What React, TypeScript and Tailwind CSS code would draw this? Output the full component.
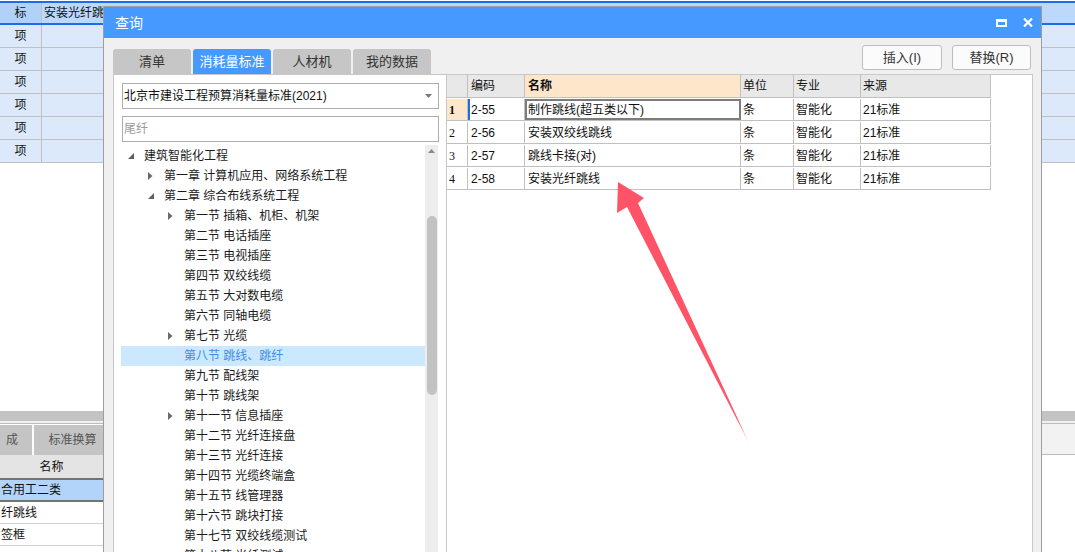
import React from 'react';

type Node = { level: number; text: string; icon?: 'open' | 'closed'; selected?: boolean };

const tree: Node[] = [
  { level: 0, text: '建筑智能化工程', icon: 'open' },
  { level: 1, text: '第一章 计算机应用、网络系统工程', icon: 'closed' },
  { level: 1, text: '第二章 综合布线系统工程', icon: 'open' },
  { level: 2, text: '第一节 插箱、机柜、机架', icon: 'closed' },
  { level: 2, text: '第二节 电话插座' },
  { level: 2, text: '第三节 电视插座' },
  { level: 2, text: '第四节 双绞线缆' },
  { level: 2, text: '第五节 大对数电缆' },
  { level: 2, text: '第六节 同轴电缆' },
  { level: 2, text: '第七节 光缆', icon: 'closed' },
  { level: 2, text: '第八节 跳线、跳纤', selected: true },
  { level: 2, text: '第九节 配线架' },
  { level: 2, text: '第十节 跳线架' },
  { level: 2, text: '第十一节 信息插座', icon: 'closed' },
  { level: 2, text: '第十二节 光纤连接盘' },
  { level: 2, text: '第十三节 光纤连接' },
  { level: 2, text: '第十四节 光缆终端盒' },
  { level: 2, text: '第十五节 线管理器' },
  { level: 2, text: '第十六节 跳块打接' },
  { level: 2, text: '第十七节 双绞线缆测试' },
  { level: 2, text: '第十八节 光纤测试' },
];

const rows = [
  { no: '1', code: '2-55', name: '制作跳线(超五类以下)' },
  { no: '2', code: '2-56', name: '安装双绞线跳线' },
  { no: '3', code: '2-57', name: '跳线卡接(对)' },
  { no: '4', code: '2-58', name: '安装光纤跳线' },
];

function TreeIcon({ kind }: { kind?: 'open' | 'closed' }) {
  return (
    <span className="flex h-[20px] w-[16px] shrink-0 items-center pl-[3px]">
      {kind === 'open' && (
        <svg width="6" height="6" viewBox="0 0 6 6">
          <polygon points="6,0 6,6 0,6" fill="#5f5f5f" />
        </svg>
      )}
      {kind === 'closed' && (
        <svg width="5" height="8" viewBox="0 0 5 8">
          <polygon points="0,0 4.5,4 0,8" fill="#6a6a6a" />
        </svg>
      )}
    </span>
  );
}

function Tab({ label, active }: { label: string; active?: boolean }) {
  return (
    <div
      className={
        active
          ? 'flex h-[25px] w-[78px] items-center justify-center rounded-t-[3px] bg-[#4599ff] text-[13px] text-white'
          : 'flex h-[25px] w-[78px] items-center justify-center rounded-t-[3px] bg-[#c6c6c6] text-[13px] text-[#333]'
      }
    >
      {label}
    </div>
  );
}

function Dialog() {
  return (
    <div className="absolute left-[103px] top-[6px] flex h-[560px] w-[939px] flex-col border border-[#9e9e9e] bg-[#f0f0f0]">
      {/* title bar */}
      <div className="flex h-[31px] shrink-0 items-center bg-[#4599ff] pl-[11px] pr-[8px] text-[14px] text-white">
        <span>查询</span>
        <div className="ml-auto flex items-center gap-[16px]">
          <span className="block h-[8px] w-[11px] border-2 border-t-[3px] border-white" />
          <svg width="10" height="9" viewBox="0 0 10 9">
            <path d="M1 0.5 L9 8.5 M9 0.5 L1 8.5" stroke="#fff" strokeWidth="2.2" />
          </svg>
        </div>
      </div>

      <div className="flex min-h-0 flex-1 pl-[9px] pr-[8px] pt-[7px]">
        {/* left column */}
        <div className="flex w-[333px] shrink-0 flex-col">
          <div className="mt-[4px] flex gap-[2px]">
            <Tab label="清单" />
            <Tab label="消耗量标准" active />
            <Tab label="人材机" />
            <Tab label="我的数据" />
          </div>
          <div className="flex min-h-0 flex-1 flex-col border-y border-l border-[#c8c8c8] bg-white">
            <div className="ml-[8px] mt-[8px] flex h-[26px] w-[317px] items-center border border-[#adadad] bg-white pl-[1px] pr-[6px] text-[12px] text-[#111]">
              <span>北京市建设工程预算消耗量标准(2021)</span>
              <svg className="ml-auto" width="7" height="4" viewBox="0 0 7 4">
                <polygon points="0,0 7,0 3.5,4" fill="#7a7a7a" />
              </svg>
            </div>
            <div className="ml-[8px] mt-[7px] flex h-[26px] w-[317px] items-center border border-[#adadad] bg-white pl-[1px] text-[12px] text-[#9a9a9a]">
              尾纤
            </div>
            <div className="ml-[7px] mr-[8px] mt-[3px] flex min-h-0 flex-1">
              <div className="flex-1 overflow-hidden pt-[1px]">
                {tree.map((n) => (
                  <div
                    key={n.text}
                    className={
                      n.selected
                        ? 'flex h-[20px] items-center bg-[#cce8ff] text-[12px] text-[#3d8de8]'
                        : 'flex h-[20px] items-center text-[12px] text-[#1b1b1b]'
                    }
                    style={{ paddingLeft: 4 + n.level * 20 }}
                  >
                    <TreeIcon kind={n.icon} />
                    <span className="ml-[3px] whitespace-nowrap">{n.text}</span>
                  </div>
                ))}
              </div>
              <div className="flex w-[13px] shrink-0 flex-col items-center bg-[#ededed]">
                <svg className="mt-[4px]" width="7" height="4" viewBox="0 0 7 4">
                  <polygon points="3.5,0 7,4 0,4" fill="#8a8a8a" />
                </svg>
                <div className="mt-[63px] h-[179px] w-[10px] rounded-[5px] bg-[#c2c2c2]" />
              </div>
            </div>
          </div>
        </div>

        {/* right column */}
        <div className="flex min-w-0 flex-1 flex-col">
          <div className="flex h-[25px] justify-end gap-[10px] pr-[2px]">
            <button className="h-[25px] w-[80px] rounded-[3px] border border-[#bdbdbd] bg-[#fbfbfb] text-[13px] text-[#333]">
              插入(I)
            </button>
            <button className="h-[25px] w-[79px] rounded-[3px] border border-[#bdbdbd] bg-[#fbfbfb] text-[13px] text-[#333]">
              替换(R)
            </button>
          </div>
          <div className="mt-[4px] min-h-0 flex-1 border border-[#c8c8c8] bg-white">
            <div className="w-[544px] text-[12px] text-[#111]">
              <div className="flex h-[23px] border-b border-[#c0c0c0] bg-[#e8e8e8]">
                <div className="w-[21px] border-r border-[#c0c0c0]" />
                <div className="flex w-[57px] items-center border-r border-[#c0c0c0] pl-[3px]">编码</div>
                <div className="flex w-[216px] items-center border-r border-[#c0c0c0] bg-[#fde6c9] pl-[3px] font-bold">名称</div>
                <div className="flex w-[53px] items-center border-r border-[#c0c0c0] pl-[2px]">单位</div>
                <div className="flex w-[67px] items-center border-r border-[#c0c0c0] pl-[2px]">专业</div>
                <div className="flex w-[130px] items-center border-r border-[#c0c0c0] pl-[2px]">来源</div>
              </div>
              {rows.map((r, i) => (
                <div key={r.no} className="flex h-[23px] border-b border-[#c0c0c0] pt-[1px]">
                  <div
                    className={
                      i === 0
                        ? "flex w-[21px] items-center border-r border-[#c0c0c0] bg-[#fde6c9] pl-[2px] font-['Liberation_Serif',serif] font-bold"
                        : "flex w-[21px] items-center border-r border-[#c0c0c0] pl-[2px] font-['Liberation_Serif',serif]"
                    }
                  >
                    {r.no}
                  </div>
                  <div
                    className={
                      i === 0
                        ? 'flex w-[57px] items-center border-l-2 border-r border-l-[#1a6fe8] border-r-[#c0c0c0] pl-[1px]'
                        : 'flex w-[57px] items-center border-r border-[#c0c0c0] pl-[3px]'
                    }
                  >
                    {r.code}
                  </div>
                  <div
                    className={
                      i === 0
                        ? 'flex w-[216px] items-center border-2 border-[#7c7c7c] pl-[1px]'
                        : 'flex w-[216px] items-center border-r border-[#c0c0c0] pl-[3px]'
                    }
                  >
                    {r.name}
                  </div>
                  <div className="flex w-[53px] items-center border-r border-[#c0c0c0] pl-[2px]">条</div>
                  <div className="flex w-[67px] items-center border-r border-[#c0c0c0] pl-[2px]">智能化</div>
                  <div className="flex w-[130px] items-center border-r border-[#c0c0c0] pl-[2px]">21标准</div>
                </div>
              ))}
            </div>
          </div>
        </div>
      </div>
    </div>
  );
}

export default function App() {
  return (
    <div className="relative h-[552px] w-[1075px] overflow-hidden bg-white font-['Liberation_Sans','Noto_Sans_CJK_SC',sans-serif] leading-none text-[#111]">
      {/* background grid */}
      <div className="flex h-full flex-col">
        <div className="h-[1px] shrink-0 bg-white" />
        <div className="flex h-[24px] shrink-0 border-y-2 border-[#1a6fe8] bg-[#bcd8fa] text-[12px]">
          <div className="flex w-[42px] items-center justify-center border-r border-[#c0c0c0] bg-[#b2d1f8]">标</div>
          <div className="flex flex-1 items-center pl-[2px] whitespace-nowrap">安装光纤跳线</div>
        </div>
        {Array.from({ length: 6 }).map((_, i) => (
          <div key={i} className="flex h-[23px] shrink-0 border-b border-[#c0c0c0] bg-[#dce9fb] text-[12px]">
            <div className="flex w-[42px] items-center justify-center border-r border-[#c0c0c0]">项</div>
            <div className="flex-1" />
          </div>
        ))}
        <div className="h-[248px] shrink-0 bg-white" />
        <div className="h-[10px] shrink-0 bg-[#c3c3c3]" />
        <div className="h-[2px] shrink-0 bg-[#f0f0f0]" />
        <div className="flex min-h-0 flex-1 border-t border-[#bcbcbc]">
          <div className="flex w-[560px] shrink-0 flex-col text-[12px]">
            <div className="flex h-[31px] gap-[2px] pt-[1px]">
              <div className="flex w-[32px] items-center bg-[#c4c4c4] pl-[6px] text-[#555]">成</div>
              <div className="flex w-[69px] items-center justify-center bg-[#c4c4c4] pl-[8px] text-[#555]">标准换算</div>
            </div>
            <div className="flex h-[23px] w-[103px] items-center justify-center bg-[#e4e4e4]">名称</div>
            <div className="flex h-[24px] w-[103px] items-center border-y-2 border-[#737373] bg-[#b3d4fa] pl-[1px]">
              合用工二类
            </div>
            <div className="flex h-[22px] w-[103px] items-center border-b border-[#d0d0d0] pl-[1px]">纤跳线</div>
            <div className="flex h-[22px] w-[103px] items-center border-b border-[#d0d0d0] pl-[1px]">签框</div>
          </div>
          <div className="flex flex-1 flex-col">
            <div className="h-[31px] border-b border-[#bcbcbc] bg-[#f2f2f2]" />
          </div>
        </div>
      </div>

      <Dialog />

      {/* annotation arrow */}
      <svg className="pointer-events-none absolute left-0 top-0" width="1075" height="552" viewBox="0 0 1075 552">
        <defs>
          <linearGradient id="tail" gradientUnits="userSpaceOnUse" x1="690" y1="320" x2="749" y2="443">
            <stop offset="0.8" stopColor="#ff5468" stopOpacity="1" />
            <stop offset="1" stopColor="#ff5468" stopOpacity="0.35" />
          </linearGradient>
        </defs>
        <polygon points="618,182 644,198 638,203 749,443 627,207 617,213" fill="url(#tail)" />
      </svg>
    </div>
  );
}
